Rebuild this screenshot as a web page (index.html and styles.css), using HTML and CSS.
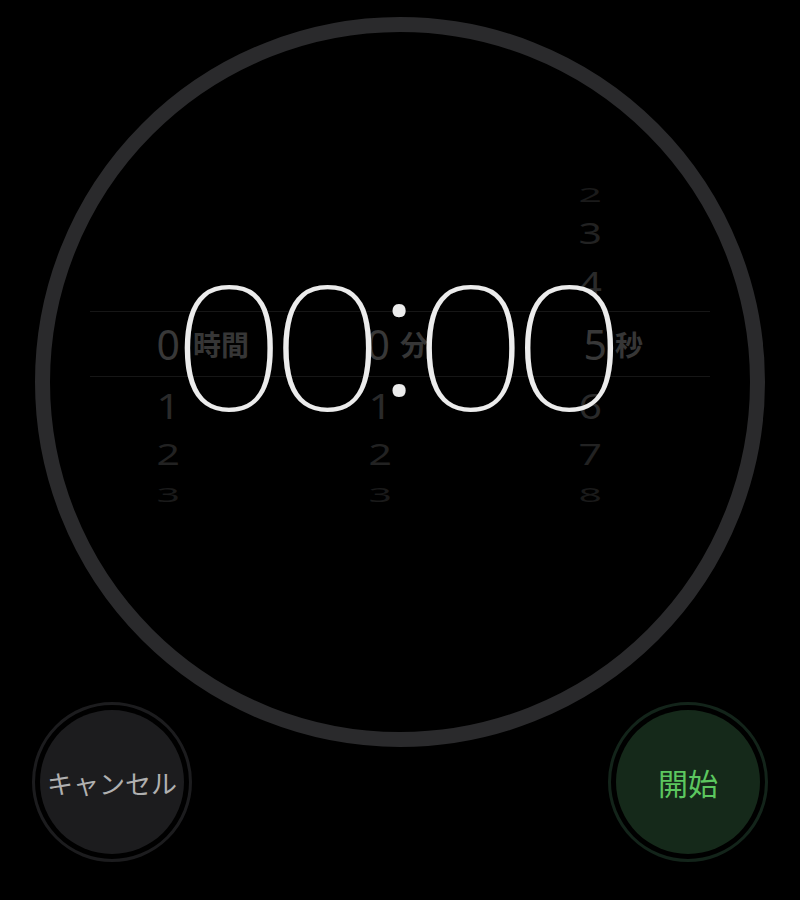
FILE: index.html
```html
<!DOCTYPE html>
<html lang="ja">
<head>
<meta charset="utf-8">
<title>タイマー</title>
<link rel="stylesheet" href="styles.css">
</head>
<body>
<div class="screen">
  <div class="dial">
    <div class="picker">
      <div class="cell r3"></div>
      <div class="cell r3"></div>
      <div class="cell r3"><span class="num">2</span></div>

      <div class="cell r2"></div>
      <div class="cell r2"></div>
      <div class="cell r2"><span class="num">3</span></div>

      <div class="cell r1"></div>
      <div class="cell r1"></div>
      <div class="cell r1"><span class="num">4</span></div>

      <div class="cell r0 sel col-hour"><span class="num">0</span><span class="unit">時間</span></div>
      <div class="cell r0 sel col-min"><span class="num">0</span><span class="unit">分</span></div>
      <div class="cell r0 sel col-sec"><span class="num">5</span><span class="unit">秒</span></div>

      <div class="cell r1"><span class="num">1</span></div>
      <div class="cell r1"><span class="num">1</span></div>
      <div class="cell r1"><span class="num">6</span></div>

      <div class="cell r2"><span class="num">2</span></div>
      <div class="cell r2"><span class="num">2</span></div>
      <div class="cell r2"><span class="num">7</span></div>

      <div class="cell r3"><span class="num">3</span></div>
      <div class="cell r3"><span class="num">3</span></div>
      <div class="cell r3"><span class="num">8</span></div>
    </div>
    <div class="time">00<span class="colon">:</span>00</div>
  </div>
  <div class="controls">
    <button class="btn btn-cancel" type="button"><span class="face">キャンセル</span></button>
    <button class="btn btn-start" type="button"><span class="face">開始</span></button>
  </div>
</div>
</body>
</html>
```
FILE: styles.css
```css
html, body {
  margin: 0;
  padding: 0;
  background: #000;
}

body {
  width: 800px;
  height: 900px;
  overflow: hidden;
  font-family: "Noto Sans", "Noto Sans CJK JP", sans-serif;
}

.screen {
  display: flex;
  flex-direction: column;
}

.dial {
  position: relative;
  box-sizing: border-box;
  width: 730px;
  height: 730px;
  margin: 17px auto 0;
  border: 15px solid #2a2a2c;
  border-radius: 50%;
  padding-top: 144px;
}

.picker {
  display: grid;
  grid-template-columns: 212px 210px 198px;
  grid-template-rows: 36px 43px 56px 66px 56px 43px 36px;
  width: 620px;
  margin: 0 auto;
}

.cell {
  display: flex;
  align-items: center;
  gap: 10px;
  overflow: hidden;
}

.cell.sel {
  border-top: 1px solid #161616;
  border-bottom: 1px solid #161616;
  box-sizing: border-box;
}

.col-hour { gap: 13px; }
.col-sec { gap: 8px; }

.num {
  display: block;
  width: 90px;
  text-align: right;
  font-family: "Noto Sans", sans-serif;
  font-weight: 400;
  font-size: 41px;
  line-height: 1;
}

.col-min .num { width: 88px; }
.col-sec .num { width: 95px; }

.unit {
  font-family: "Noto Sans CJK JP", sans-serif;
  font-weight: 700;
  font-size: 28px;
  line-height: 1;
  color: #363636;
}

.r0 { color: #383838; }
.r1 { color: #2a2a2a; }
.r2 { color: #222; }
.r3 { color: #1a1a1a; }

.r1 .num { transform: scaleY(0.85); }
.r2 .num { transform: scaleY(0.7); }
.r3 .num { transform: scaleY(0.5); }

.time {
  position: absolute;
  top: 225px;
  left: 0;
  right: 0;
  padding-right: 14px;
  text-align: center;
  font-family: "Noto Sans", sans-serif;
  font-weight: 130;
  font-size: 172px;
  line-height: 1;
  letter-spacing: -12.3px;
  color: #ececec;
  transform: scaleX(1.15);
}

.colon {
  font-size: 170px;
  font-weight: 200;
  line-height: 0;
  vertical-align: 14.6px;
  margin: 0 6px;
}

.controls {
  display: flex;
  justify-content: space-between;
  padding: 0 32px;
  margin-top: -45px;
}

.btn {
  box-sizing: border-box;
  width: 160px;
  height: 160px;
  padding: 5px;
  border-radius: 50%;
  background: #000;
  font: inherit;
  cursor: pointer;
}

.face {
  display: flex;
  align-items: center;
  justify-content: center;
  width: 100%;
  height: 100%;
  border-radius: 50%;
  font-family: "Noto Sans CJK JP", sans-serif;
}

.btn-cancel {
  border: 3px solid #1c1c1e;
}

.btn-cancel .face {
  background: #1c1c1e;
  color: #b0b0b0;
  font-size: 26px;
}

.btn-start {
  border: 3px solid #13241a;
}

.btn-start .face {
  background: #15291a;
  color: #5cc75f;
  font-size: 30px;
}
```
